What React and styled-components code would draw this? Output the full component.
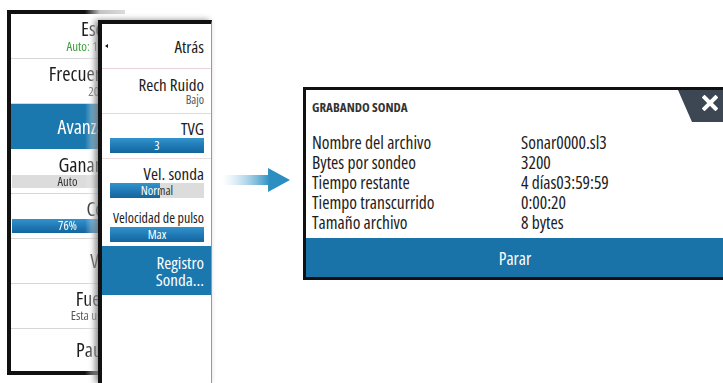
import React from 'react';
import styled, { createGlobalStyle } from 'styled-components';

const Global = createGlobalStyle`
  html, body { margin: 0; padding: 0; background: #fff; }
  body {
    width: 723px; height: 383px; overflow: hidden;
    font-family: "Open Sans", "DejaVu Sans Condensed", sans-serif;
    font-stretch: 77%;
    color: #1c1c1c;
  }
  * { box-sizing: border-box; }
`;

const BLUE = '#1b78ae';
const BAR = 'linear-gradient(to bottom, #3293cd 0%, #1f78b3 55%, #14659c 100%)';

const Stage = styled.div`
  display: flex;
  align-items: flex-start;
  width: 723px;
  height: 383px;
  overflow: hidden;
`;

const MenuStack = styled.div`
  position: relative;
  flex: 0 0 213px;
  height: 383px;
`;

const BackMenu = styled.div`
  margin: 10px 0 0 7px;
  width: 118px;
  border: 4px solid #111;
  border-right: none;
  background: #fff;
  display: flex;
  flex-direction: column;
  -webkit-mask-image: linear-gradient(to right, #000 0, #000 78px, rgba(0,0,0,0.25) 93px, rgba(0,0,0,0.15) 100%);
  mask-image: linear-gradient(to right, #000 0, #000 78px, rgba(0,0,0,0.25) 93px, rgba(0,0,0,0.15) 100%);
`;

const FrontMenu = styled.div`
  position: absolute;
  left: 98px;
  top: 20px;
  bottom: 0;
  width: 114px;
  background: #fff;
  border-top: 4px solid #111;
  border-left: 4px solid #111;
  border-right: 1px solid #9a9a9a;
  box-shadow: -3px 0 6px rgba(0, 0, 0, 0.45);
  display: flex;
  flex-direction: column;
`;

const Row = styled.div`
  position: relative;
  height: ${p => p.h || 45}px;
  flex: 0 0 auto;
  display: flex;
  flex-direction: column;
  justify-content: center;
  text-align: right;
  padding: ${p => (p.back ? '0 2px 0 1px' : '0 7px 0 8px')};
  background: ${p => (p.active ? BLUE : 'transparent')};
  color: ${p => (p.active ? '#fff' : '#1c1c1c')};
  border-bottom: ${p => (p.sep ? `1px solid ${p.sep}` : 'none')};
`;

const Title = styled.div`
  font-size: ${p => p.size || 17}px;
  line-height: ${p => p.lh || 17}px;
  white-space: nowrap;
`;

const Sub = styled.div`
  font-size: ${p => p.size || 12}px;
  line-height: 14px;
  color: ${p => p.color || '#555'};
  white-space: nowrap;
`;

const Bar = styled.div`
  position: relative;
  height: ${p => p.h || 15}px;
  line-height: ${p => p.h || 15}px;
  margin-top: 1px;
  font-size: 12.5px;
  text-align: center;
  color: ${p => (p.grey ? '#333' : '#fff')};
  background: ${p => (p.grey ? '#dcdcdc' : BAR)};
  overflow: hidden;
  white-space: nowrap;
`;

const Fill = styled.div`
  position: absolute;
  left: 0; top: 0; bottom: 0;
  overflow: hidden;
  background: ${BAR};
`;

const FillText = styled.div`
  position: absolute;
  left: 0; top: 0; bottom: 0;
  color: #fff;
  text-align: center;
`;

const Back = styled.span`
  position: absolute;
  left: 3px;
  top: 50%;
  width: 0; height: 0;
  margin-top: -2px;
  border-top: 2px solid transparent;
  border-bottom: 2px solid transparent;
  border-right: 3px solid #111;
`;

const ArrowSlot = styled.div`
  flex: 0 0 90px;
  padding: 168px 0 0 9px;
`;

const Dialog = styled.section`
  position: relative;
  flex: 0 0 424px;
  margin-top: 87px;
  height: 193px;
  border: 3px solid #111;
  background: #fff;
  display: flex;
  flex-direction: column;
`;

const Header = styled.div`
  height: 42px;
  padding: 10px 0 0 6px;
  font-size: 13px;
  line-height: 14px;
  font-weight: 700;
  color: #333;
`;

const Close = styled.div`
  position: absolute;
  top: 0;
  right: 0;
  width: 46px;
  height: 32px;
  background: #3d4753;
  clip-path: polygon(0 0, 100% 0, 100% 100%, 14px 100%);
  display: flex;
  justify-content: flex-end;
  align-items: flex-start;
  padding: 5px 6px 0 0;
`;

const Info = styled.div`
  display: grid;
  grid-template-columns: 209px 1fr;
  padding-left: 6px;
  font-size: 17.5px;
  line-height: 20px;
  color: #1c1c1c;
`;

const StopBar = styled.div`
  margin-top: 6px;
  height: 39px;
  background: #1a73a8;
  color: #fff;
  font-size: 17.5px;
  display: flex;
  align-items: center;
  justify-content: center;
`;

function SplitBar({ value, label }) {
  return (
    <Bar grey>
      {label}
      <Fill style={{ width: `${value}%` }}>
        <FillText style={{ width: `${10000 / value}%` }}>{label}</FillText>
      </Fill>
    </Bar>
  );
}

const rows = [
  ['Nombre del archivo', 'Sonar0000.sl3'],
  ['Bytes por sondeo', '3200'],
  ['Tiempo restante', '4 días03:59:59'],
  ['Tiempo transcurrido', '0:00:20'],
  ['Tamaño archivo', '8 bytes'],
];

export default function App() {
  return (
    <>
      <Global />
      <Stage>
        <MenuStack>
          <BackMenu>
            <Row back sep="#d6d6d6">
              <Title size={20} lh={20}>Escala</Title>
              <Sub size={13} color="#3a9f3a">Auto: 15.0 m</Sub>
            </Row>
            <Row back sep="#d6d6d6">
              <Title size={20} lh={20}>Frecuencia</Title>
              <Sub size={13}>200 kHz</Sub>
            </Row>
            <Row back active>
              <Title size={20} lh={20}>Avanzado</Title>
            </Row>
            <Row back sep="#d6d6d6">
              <Title size={20} lh={19}>Ganancia</Title>
              <Bar grey h={13}>Auto</Bar>
            </Row>
            <Row back sep="#d6d6d6">
              <Title size={20} lh={19}>Color</Title>
              <Bar h={14}>76%</Bar>
            </Row>
            <Row back sep="#d6d6d6">
              <Title size={20} lh={20}>Vista</Title>
            </Row>
            <Row back sep="#d6d6d6">
              <Title size={20} lh={18}>Fuente</Title>
              <Sub size={13}>Esta unidad</Sub>
            </Row>
            <Row back h={42}>
              <Title size={20} lh={20}>Pausar</Title>
            </Row>
          </BackMenu>
          <FrontMenu>
            <Row sep="#ead3da">
              <Back />
              <Title>Atrás</Title>
            </Row>
            <Row sep="#dddddd">
              <Title>Rech Ruido</Title>
              <Sub>Bajo</Sub>
            </Row>
            <Row sep="#eadde2">
              <Title>TVG</Title>
              <Bar>3</Bar>
            </Row>
            <Row>
              <Title>Vel. sonda</Title>
              <SplitBar value={53} label="Normal" />
            </Row>
            <Row h={42}>
              <Title size={14}>Velocidad de pulso</Title>
              <Bar>Max</Bar>
            </Row>
            <Row active h={49}>
              <Title>Registro</Title>
              <Title>Sonda...</Title>
            </Row>
          </FrontMenu>
        </MenuStack>
        <ArrowSlot>
          <svg width="68" height="24" viewBox="0 0 68 24">
            <defs>
              <linearGradient id="arrowGrad" x1="0" x2="1" y1="0" y2="0">
                <stop offset="0" stopColor="#a9d3ea" stopOpacity="0" />
                <stop offset="0.7" stopColor="#2c8fc2" stopOpacity="1" />
                <stop offset="1" stopColor="#2a8dc0" stopOpacity="1" />
              </linearGradient>
            </defs>
            <path d="M0 7 H46 V0 L68 12 L46 24 V17 H0 Z" fill="url(#arrowGrad)" />
          </svg>
        </ArrowSlot>
        <Dialog>
          <Header>GRABANDO SONDA</Header>
          <Close>
            <svg width="16" height="16" viewBox="0 0 16 16">
              <path d="M2.5 2.5 L13.5 13.5 M13.5 2.5 L2.5 13.5" stroke="#fff" strokeWidth="4" strokeLinecap="square" />
            </svg>
          </Close>
          <Info>
            {rows.map(([k, v]) => (
              <React.Fragment key={k}>
                <div>{k}</div>
                <div>{v}</div>
              </React.Fragment>
            ))}
          </Info>
          <StopBar>Parar</StopBar>
        </Dialog>
      </Stage>
    </>
  );
}
